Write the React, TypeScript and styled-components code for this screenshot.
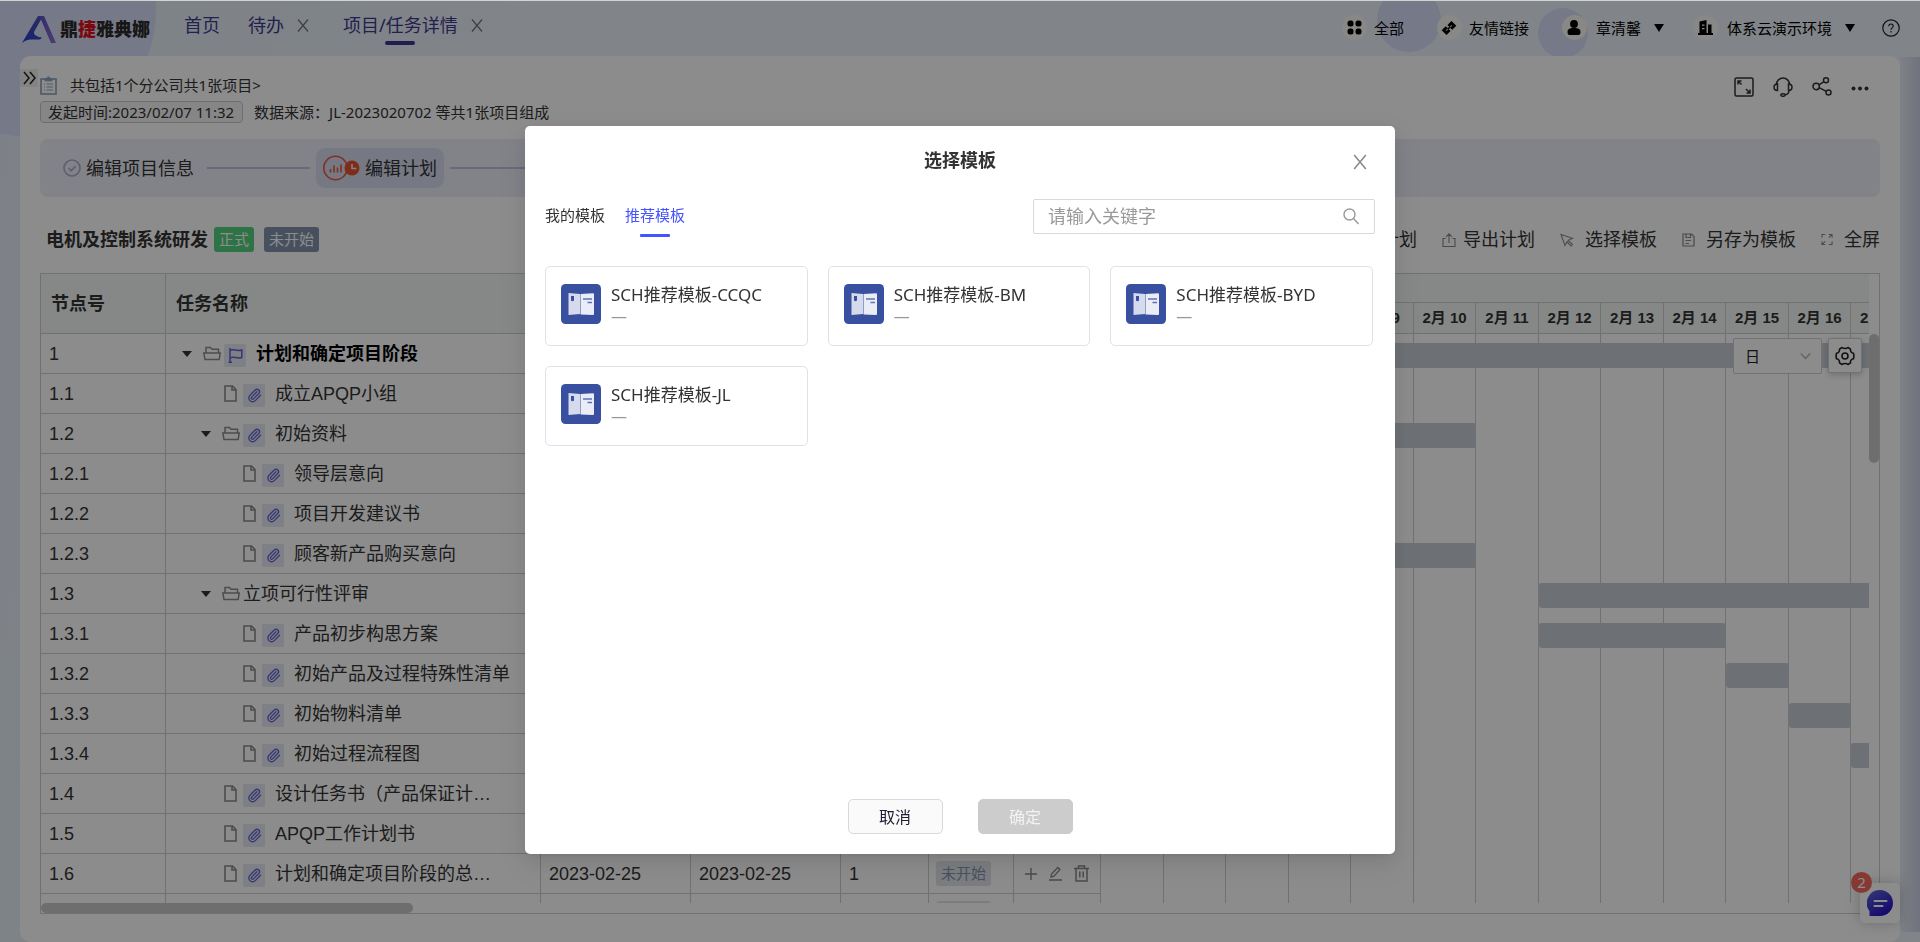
import React from "react";
import styled, { createGlobalStyle, css } from "styled-components";

const UI_FONT = `"Noto Sans", "Noto Sans CJK SC", sans-serif`;
const GRID_FONT = `"Liberation Sans", "Noto Sans CJK SC", sans-serif`;

const Global = createGlobalStyle`
  *, *::before, *::after { box-sizing: border-box; }
  body { margin: 0; background: #ecf3f9; font-family: ${UI_FONT}; font-size: 15px; line-height: 22px; color: #333; overflow: hidden; }
  button, input, select { font: inherit; color: inherit; margin: 0; padding: 0; }
  button { border: 0; background: none; cursor: pointer; }
  a { color: inherit; text-decoration: none; }
  svg { display: block; flex: none; }
`;

/* ---------- shell ---------- */

const Shell = styled.div`
  position: relative;
  height: 100vh;
  display: flex;
  flex-direction: column;
  border-top: 1px solid #cdd6d3;
  background: linear-gradient(100deg, #e4ecf6 0%, #ecf3f9 30%, #ecf3f9 100%);
  overflow: hidden;
`;

const Bubble = styled.span<{ $size: number; $top: number; $left?: number; $right?: number }>`
  position: absolute;
  width: ${(p) => p.$size}px;
  height: ${(p) => p.$size}px;
  top: ${(p) => p.$top}px;
  ${(p) => (p.$left !== undefined ? `left: ${p.$left}px;` : `right: ${p.$right}px;`)}
  border-radius: 50%;
  background: #d7dcf7;
`;

const EdgeShade = styled.span`
  position: absolute;
  top: 56px;
  right: 0;
  bottom: 10px;
  width: 20px;
  background: linear-gradient(90deg, rgba(205, 208, 228, 0.2), #cdd0e4);
`;

const TopBar = styled.header`
  position: relative;
  display: flex;
  justify-content: space-between;
  height: 55px;
  padding: 0 20px 0 22px;
`;

const Brand = styled.a`
  display: flex;
  align-items: center;
  gap: 4px;
  width: 162px;
  height: 56px;
  color: #2b2b2b;
  font-size: 18px;
  font-weight: 900;
  em { font-style: normal; color: #e0101c; }
`;

const NavSide = styled.div`
  display: flex;
  align-items: flex-start;
`;

const NavTab = styled.a<{ $active?: boolean }>`
  position: relative;
  height: 48px;
  padding-top: 12px;
  font-size: 18px;
  line-height: 24px;
  color: #40398f;
  ${(p) =>
    p.$active &&
    css`
      &::after {
        content: "";
        position: absolute;
        left: 50%;
        margin-left: -15px;
        top: 40px;
        width: 30px;
        height: 4px;
        border-radius: 2px;
        background: #3c3590;
      }
    `}
`;

const TabClose = styled.button<{ $gap: number }>`
  display: flex;
  align-items: center;
  height: 49px;
  margin-left: 13px;
  margin-right: ${(p) => p.$gap}px;
  color: #777;
`;

const NavSpacer = styled.span`
  width: 28px;
`;

const AccountSide = styled.div`
  display: flex;
  align-items: center;
  height: 53px;
  color: #000;
`;

const AccountItem = styled.button<{ $gap: number }>`
  display: flex;
  align-items: center;
  color: #000;
  margin-right: ${(p) => p.$gap}px;
`;

const Disc = styled.span<{ $gap: number }>`
  display: flex;
  align-items: center;
  justify-content: center;
  width: 25px;
  height: 25px;
  margin-right: ${(p) => p.$gap}px;
  border-radius: 50%;
  background: #f8f7f4;
`;

const Caret = styled.span`
  margin-left: 13px;
  border: 5px solid transparent;
  border-top: 8px solid #000;
  border-bottom: 0;
`;

/* ---------- page card ---------- */

const PageCard = styled.main`
  position: relative;
  flex: 1;
  min-height: 0;
  display: flex;
  flex-direction: column;
  margin: 0 20px;
  padding: 15px 20px 28px;
  border-radius: 11px;
  background: #fff;
`;

const Expander = styled.button`
  position: absolute;
  left: 0;
  top: 13px;
  width: 18px;
  height: 18px;
  display: flex;
  align-items: center;
  justify-content: center;
  background: #efefef;
  color: #222;
`;

const InfoHead = styled.section`
  display: flex;
  justify-content: space-between;
  height: 68px;
`;

const SourceLine = styled.div`
  display: flex;
  align-items: center;
  gap: 13px;
  height: 28px;
  margin-bottom: 2px;
`;

const MetaLine = styled.div`
  display: flex;
  align-items: center;
  gap: 11px;
  height: 22px;
`;

const TimeTag = styled.span`
  height: 22px;
  padding: 0 8px 0 7px;
  border: 1px solid #c8c8c8;
  border-radius: 4px;
  background: #f5f5f5;
  line-height: 20px;
`;

const HeadTools = styled.div`
  display: flex;
  align-items: center;
  gap: 19px;
  height: 31px;
  padding-right: 11px;
`;

const IconButton = styled.button`
  display: flex;
  align-items: center;
  justify-content: center;
  color: inherit;
`;

const Steps = styled.nav`
  display: flex;
  align-items: center;
  gap: 6px;
  height: 58px;
  padding: 0 16px;
  border-radius: 8px;
  background: #eceef7;
`;

const Step = styled.a<{ $active?: boolean }>`
  display: flex;
  align-items: center;
  gap: 5px;
  height: 40px;
  padding: 0 7px 1px;
  border-radius: 9px;
  font-size: 18px;
  background: ${(p) => (p.$active ? "#d7daf1" : "transparent")};
`;

const StepLine = styled.span`
  width: 103px;
  height: 2px;
  background: #c1c0e0;
`;

const PlanBar = styled.section`
  display: flex;
  align-items: center;
  justify-content: space-between;
  height: 76px;
  padding-top: 12px;
  padding-left: 6px;
`;

const PlanTitle = styled.h1`
  display: flex;
  align-items: center;
  gap: 6px;
  margin: 0;
  padding-bottom: 3px;
  font-size: 18px;
  line-height: 25px;
  font-weight: 700;
`;

const BadgeRow = styled.span`
  display: flex;
  gap: 10px;
`;

const Badge = styled.span<{ $tone: "green" | "slate" | "soft" }>`
  display: inline-block;
  height: 25px;
  padding: 0 5px;
  border-radius: 3px;
  font-size: 15px;
  line-height: 25px;
  font-weight: 400;
  ${(p) =>
    ({
      green: "background: #54d17e; color: #fff;",
      slate: "background: #8292ab; color: #fff;",
      soft: "background: #e1e4eb; color: #8294b2;",
    })[p.$tone]}
`;

const PlanTools = styled.div`
  display: flex;
  align-items: center;
  gap: 25px;
  padding-bottom: 3px;
`;

const PlanTool = styled.button<{ $gap: number }>`
  display: flex;
  align-items: center;
  gap: ${(p) => p.$gap}px;
  font-size: 18px;
  line-height: 25px;
  svg { color: #888; }
`;

/* ---------- plan panel ---------- */

const Panel = styled.section`
  position: relative;
  flex: 1;
  min-height: 0;
  display: grid;
  grid-template-columns: minmax(0, 1fr) 10px;
  grid-template-rows: minmax(0, 1fr) 10px;
  border: 1px solid #cecece;
  font-family: ${GRID_FONT};
`;

const PanelBody = styled.div`
  display: flex;
  overflow: hidden;
`;

const TaskTable = styled.table`
  flex: none;
  width: 1060px;
  table-layout: fixed;
  border-collapse: separate;
  border-spacing: 0;
  font-size: 18px;
  th, td {
    height: 40px;
    padding: 0 8px;
    border-right: 1px solid #cecece;
    border-bottom: 1px solid #cecece;
    text-align: left;
    white-space: nowrap;
    line-height: 24px;
    overflow: hidden;
  }
  th {
    height: 60px;
    padding: 0 10px;
    background: #f3f8f5;
    font-weight: 700;
  }
`;

const NameCell = styled.div<{ $level: number; $strong?: boolean }>`
  display: flex;
  align-items: center;
  padding-left: ${(p) => p.$level * 19 - 11}px;
  ${(p) => p.$strong && "font-weight: 700; color: #000;"}
`;

const Toggle = styled.span<{ $open?: boolean }>`
  width: 21px;
  &::before {
    content: "";
    display: ${(p) => (p.$open ? "block" : "none")};
    width: 0;
    border: 5px solid transparent;
    border-top: 6px solid #333;
    border-bottom: 0;
  }
`;

const KindSlot = styled.span<{ $leaf?: boolean }>`
  width: 21px;
  padding-left: ${(p) => (p.$leaf ? 2 : 0)}px;
  color: #8c8c8c;
`;

const MarkBox = styled.span`
  display: flex;
  align-items: center;
  justify-content: center;
  width: 22px;
  height: 23px;
  margin: 4px 10px 0 0;
  border-radius: 2px;
  background: #e7e8f5;
  color: #6065d0;
`;

const RowActions = styled.div`
  display: flex;
  align-items: center;
  justify-content: space-between;
  padding: 0 3px;
  color: #888;
`;

const Gantt = styled.div`
  flex: 1;
  min-width: 0;
  overflow: hidden;
`;

const MonthStrip = styled.div`
  height: 29px;
  border-bottom: 1px solid #cecece;
  background: #f3f8f5;
`;

const DayStrip = styled.div`
  display: flex;
  height: 31px;
  border-bottom: 1px solid #cecece;
  background: #f3f8f5;
`;

const Day = styled.span`
  flex: none;
  width: 63px;
  border-right: 1px solid #cecece;
  text-align: center;
  font-size: 15px;
  line-height: 29px;
  font-weight: 700;
  white-space: nowrap;
  &:nth-child(even) { width: 62px; }
`;

const Chart = styled.div`
  position: relative;
  height: 600px;
  display: flex;
`;

const DayColumn = styled.span`
  flex: none;
  width: 63px;
  border-right: 1px solid #cecece;
  &:nth-child(even) { width: 62px; }
`;

const Bar = styled.span`
  position: absolute;
  height: 25px;
  border-radius: 3px;
  background: #c7cdd4;
`;

const VTrack = styled.div`
  padding-top: 60px;
`;

const VThumb = styled.div`
  height: 129px;
  border-radius: 5px;
  background: #c8c8c8;
`;

const HThumb = styled.div`
  width: 372px;
  height: 10px;
  border-radius: 5px;
  background: #c8c8c8;
`;

const ScaleTools = styled.div`
  position: absolute;
  top: 64px;
  right: 17px;
  display: flex;
  gap: 6px;
`;

const ScaleLabel = styled.label`
  position: relative;
  display: block;
  color: #b0b0b0;
  svg { position: absolute; right: 11px; top: 13px; }
`;

const ScaleSelect = styled.select`
  appearance: none;
  display: block;
  width: 89px;
  height: 36px;
  padding: 0 11px;
  border: 1px solid #d0d0d0;
  border-radius: 2px;
  background: #fff;
  color: #222;
  font-family: ${UI_FONT};
  font-size: 15px;
`;

const GearButton = styled.button`
  display: flex;
  align-items: center;
  justify-content: center;
  width: 34px;
  height: 35px;
  border: 1px solid #d0d0d0;
  border-radius: 2px;
  background: #fff;
  color: #222;
  box-shadow: 0 2px 6px rgba(0, 0, 0, 0.2);
`;

/* ---------- chat ---------- */

const Chat = styled.button`
  position: absolute;
  right: 20px;
  bottom: 19px;
  display: flex;
  align-items: center;
  justify-content: center;
  width: 40px;
  height: 40px;
  border-radius: 5px;
  background: #fff;
  box-shadow: 0 0 14px rgba(0, 0, 0, 0.22);
`;

const ChatCount = styled.span`
  position: absolute;
  left: -9px;
  top: -11px;
  width: 21px;
  height: 21px;
  border-radius: 50%;
  background: #f4685c;
  color: #fff;
  line-height: 21px;
`;

/* ---------- dialog ---------- */

const Mask = styled.div`
  position: fixed;
  inset: 1px 0 0;
  display: flex;
  justify-content: center;
  align-items: flex-start;
  padding-top: 125px;
  background: rgba(0, 0, 0, 0.45);
`;

const Dialog = styled.section`
  position: relative;
  width: 870px;
  height: 728px;
  display: flex;
  flex-direction: column;
  padding: 0 20px 20px;
  border-radius: 5px;
  background: #fff;
  box-shadow: 0 3px 7px -4px rgba(0, 0, 0, 0.12), 0 7px 18px rgba(0, 0, 0, 0.08),
    0 10px 31px 9px rgba(0, 0, 0, 0.05);
`;

const DialogTitle = styled.h2`
  margin: 0 0 5px;
  font-size: 18px;
  line-height: 68px;
  font-weight: 700;
  text-align: center;
`;

const DialogClose = styled.button`
  position: absolute;
  top: 26px;
  right: 26px;
  padding: 2px;
  color: #888;
`;

const FilterRow = styled.div`
  display: flex;
  align-items: center;
  justify-content: space-between;
`;

const Tabs = styled.div`
  display: flex;
  gap: 20px;
`;

const Tab = styled.button<{ $active?: boolean }>`
  position: relative;
  padding-bottom: 2px;
  line-height: 33px;
  color: ${(p) => (p.$active ? "#4454ff" : "#333")};
  ${(p) =>
    p.$active &&
    css`
      &::after {
        content: "";
        position: absolute;
        left: 15px;
        right: 15px;
        bottom: -3px;
        height: 3px;
        border-radius: 1px;
        background: #4454ff;
      }
    `}
`;

const SearchBox = styled.label`
  display: flex;
  align-items: center;
  width: 342px;
  height: 35px;
  padding: 0 15px 0 14px;
  border: 1px solid #d9d9d9;
  border-radius: 2px;
  color: #999;
  input {
    flex: 1;
    min-width: 0;
    padding-bottom: 2px;
    border: 0;
    outline: 0;
    background: none;
    font-size: 18px;
    line-height: 24px;
  }
  input::placeholder { color: #999; opacity: 1; }
`;

const TemplateGrid = styled.div`
  flex: 1;
  display: grid;
  grid-template-columns: repeat(3, 1fr);
  grid-auto-rows: 80px;
  gap: 20px;
  margin: 32px 2px 0 0;
`;

const TemplateCard = styled.button`
  display: flex;
  align-items: flex-start;
  gap: 10px;
  padding: 17px 15px;
  border: 1px solid #dce3eb;
  border-radius: 5px;
  text-align: left;
`;

const TemplateText = styled.span`
  display: grid;
  font-size: 17px;
  line-height: 22px;
  small { font-size: 16px; line-height: 20px; color: #999; }
`;

const DialogFooter = styled.footer`
  display: flex;
  justify-content: center;
  gap: 35px;
`;

const FooterButton = styled.button<{ $disabled?: boolean }>`
  width: 95px;
  height: 35px;
  border: 1px solid ${(p) => (p.$disabled ? "#ccc" : "#d9d9d9")};
  border-radius: 5px;
  background: ${(p) => (p.$disabled ? "#ccc" : "#fafafa")};
  color: ${(p) => (p.$disabled ? "#f2f2f2" : "#1d1c33")};
  font-size: 16px;
`;

/* ---------- drawings ---------- */

const Cross = ({ w = 12, h = 13 }: { w?: number; h?: number }) => (
  <svg width={w} height={h} viewBox="0 0 12 13" fill="none" stroke="currentColor" strokeWidth="1.3">
    <path d="M1 .5 11 12.5M11 .5 1 12.5" />
  </svg>
);

const Logo = () => (
  <svg width="34" height="27" viewBox="0 0 34 27">
    <defs>
      <linearGradient id="lg1" x1="0" y1="1" x2="1" y2="0">
        <stop offset="0" stopColor="#1d3fd0" />
        <stop offset="1" stopColor="#5a4fae" />
      </linearGradient>
      <linearGradient id="lg2" x1="0" y1="0" x2="1" y2="1">
        <stop offset="0" stopColor="#5a4fc8" />
        <stop offset="1" stopColor="#8a6fc8" />
      </linearGradient>
    </defs>
    <path d="M16 0h5L12.500 15c-1.500 2.500 0 4.500 4.500 6l3 .5-2 2H7.500Q3 24 0 27Z" fill="url(#lg1)" />
    <path d="M16 0h6l12 27h-5L18.500 2.500Z" fill="url(#lg2)" />
  </svg>
);

const GridGlyph = () => (
  <svg width="15" height="15" viewBox="0 0 15 15" fill="#000">
    <rect x="0.500" y="0.500" width="6" height="6" rx="2.500" />
    <rect x="8.500" y="0.500" width="6" height="6" rx="2.500" />
    <rect x="0.500" y="8.500" width="6" height="6" rx="2.500" />
    <rect x="8.500" y="8.500" width="6" height="6" rx="2.500" />
  </svg>
);

const LinkGlyph = () => (
  <svg width="16" height="16" viewBox="0 0 16 16" fill="none" stroke="#000" strokeWidth="3">
    <path d="M7.500 6 10.500 3l2.700 2.700-3 3M8.500 10l-3 3-2.700-2.700 3-3" />
    <path d="m6.800 9.200 2.400-2.400" strokeWidth="1.600" />
  </svg>
);

const UserGlyph = () => (
  <svg width="14" height="15" viewBox="0 0 14 15" fill="#000">
    <circle cx="7" cy="4" r="3.900" />
    <path d="M.5 12c0-3 2-4 6.500-4s6.500 1 6.500 4c0 2-.7 3-2 3h-9c-1.300 0-2-1-2-3Z" />
  </svg>
);

const TowerGlyph = () => (
  <svg width="15" height="15" viewBox="0 0 15 15" fill="#000">
    <path fillRule="evenodd" d="M1.500 1.500 8.500 0v13H10V4.500h3.500V13H15v2H0v-2h1.500ZM4 4.500v1.200h2.500V4.500ZM4 8v1.200h2.500V8Z" />
  </svg>
);

const HelpGlyph = () => (
  <svg width="18" height="18" viewBox="0 0 18 18" fill="none" stroke="#222" strokeWidth="1.200">
    <circle cx="9" cy="9" r="8.200" />
    <path d="M6.800 7.300c0-3 4.400-3 4.400-.2 0 1.800-2.200 1.800-2.200 3.600M9 12v1.500" />
  </svg>
);

const ClipboardGlyph = () => (
  <svg width="17" height="19" viewBox="0 0 17 19" fill="none" stroke="#8ca3ba">
    <rect x="1" y="3" width="15" height="15" strokeWidth="1.600" />
    <path d="M5 4.800V2.500h2a1.500 1.500 0 0 1 3 0h2v2.300Z" fill="#8ca3ba" />
    <path d="M4 8h1m1.500 0H13M4 11h1m1.500 0H13M4 14h1m1.500 0H13" strokeWidth="1.200" />
  </svg>
);

const ResizeGlyph = () => (
  <svg width="20" height="20" viewBox="0 0 20 20" fill="none" stroke="currentColor" strokeWidth="1.500">
    <rect x="1" y="1" width="18" height="18" rx="1.500" />
    <path d="M4 7.500V4h3.500M4 4l3.500 3.500M16 12.500V16h-3.500M16 16l-4-4" />
  </svg>
);

const HeadsetGlyph = () => (
  <svg width="20" height="20" viewBox="0 0 20 20" fill="none" stroke="currentColor" strokeWidth="1.500">
    <path d="M3.500 7.500a6.500 6.500 0 0 1 13 0M4.500 7C2 7 1 8.500 1 10.300s1 3.200 3.500 3.200ZM15.500 7c2.500 0 3.500 1.500 3.500 3.300s-1 3.200-3.500 3.200ZM16 13.500c0 2.500-1.500 4-4 4.300" />
    <ellipse cx="10" cy="18" rx="2.200" ry="1.300" />
  </svg>
);

const ShareGlyph = () => (
  <svg width="20" height="20" viewBox="0 0 20 20" fill="none" stroke="currentColor" strokeWidth="1.500">
    <circle cx="4.200" cy="9.500" r="3.200" />
    <circle cx="14" cy="3.300" r="2.500" />
    <circle cx="16.500" cy="15.500" r="2.500" />
    <path d="m7 7.800 4.900-3.100M7.200 10.700l7 3.600" />
  </svg>
);

const DotsGlyph = () => (
  <svg width="18" height="20" viewBox="0 0 18 20" fill="currentColor">
    <circle cx="2.500" cy="11.500" r="2" />
    <circle cx="9" cy="11.500" r="2" />
    <circle cx="15.500" cy="11.500" r="2" />
  </svg>
);

const CheckGlyph = () => (
  <svg width="18" height="18" viewBox="0 0 18 18" fill="none" stroke="#adabd2" strokeWidth="1.700">
    <circle cx="9" cy="9" r="8" />
    <path d="m5.500 9 2.700 2.700 4.500-4.500" />
  </svg>
);

const StageGlyph = () => (
  <svg width="37" height="26" viewBox="0 0 37 26" fill="none" stroke="#e8583a">
    <circle cx="12.500" cy="13" r="11.700" strokeWidth="1.600" />
    <path d="M7.500 17.500V14m3.500 3.500V10.500m3.500 7v-5m3.500 5V9.500" strokeWidth="1.600" />
    <circle cx="29" cy="13" r="7.500" fill="#e8502f" stroke="none" />
    <path d="M29 9v4.500h4.500" stroke="#edeff9" strokeWidth="1.500" />
  </svg>
);

const ExportGlyph = () => (
  <svg width="14" height="14" viewBox="0 0 14 14" fill="none" stroke="currentColor" strokeWidth="1.100">
    <path d="M3.500 5.500H1v8h12v-8h-2.500M7 10V1M4 3.800l3-3 3 3" />
  </svg>
);

const CursorGlyph = () => (
  <svg width="14" height="14" viewBox="0 0 14 14" fill="none" stroke="currentColor" strokeWidth="1.100">
    <path d="m1 1.500 11.500 3.800-4.300 2 4.300 4.200-1.500 1.500L7 8.800 5 12.500Z" />
  </svg>
);

const SaveGlyph = () => (
  <svg width="13" height="14" viewBox="0 0 13 14" fill="none" stroke="currentColor" strokeWidth="1.200">
    <path d="M1 1h8.500L12 3.500V13H1ZM4 1v3.500h4.500V1M3.500 7.500H9M3.500 10.500H7" />
  </svg>
);

const FullGlyph = () => (
  <svg width="12" height="13" viewBox="0 0 13 13" fill="none" stroke="currentColor" strokeWidth="1.100">
    <path d="M1 4.500V1h3.500M8.500 1H12v3.500M12 8.500V12H8.500M4.500 12H1V8.500M12 1 8.500 4.500M1 12l3.500-3.500" />
  </svg>
);

const FolderGlyph = () => (
  <svg width="18" height="15" viewBox="0 0 18 15" fill="none" stroke="currentColor" strokeWidth="1.500">
    <path d="M3 7V1.500h4.500L9 3.200h6.500V7M.8 7h16.400l-1 6.500H2Z" />
  </svg>
);

const FileGlyph = () => (
  <svg width="13" height="17" viewBox="0 0 13 17" fill="none" stroke="currentColor" strokeWidth="1.600">
    <path d="M1 1h7.500L12 4.500V16H1ZM8 1v4h4" />
  </svg>
);

const FlagGlyph = () => (
  <svg width="15" height="15" viewBox="0 0 15 15" fill="none" stroke="currentColor" strokeWidth="1.500">
    <path d="M2 0v14.300M.5 14.300h3.500M2 2.500c4-2.500 6 1.500 11.800-.5v7.500C9 11.500 6 7.500 2 10" />
  </svg>
);

const ClipGlyph = () => (
  <svg width="15" height="15" viewBox="0 0 24 24" fill="none" stroke="currentColor" strokeWidth="2.100" strokeLinecap="round">
    <path d="m16 6-8.414 8.586a2 2 0 0 0 2.829 2.829l8.414-8.586a4 4 0 1 0-5.657-5.657l-8.379 8.551a6 6 0 1 0 8.485 8.485l8.379-8.551" />
  </svg>
);

const PlusGlyph = () => (
  <svg width="12" height="14" viewBox="0 0 12 14" fill="none" stroke="currentColor" strokeWidth="1.400">
    <path d="M6 1v12M0 7h12" />
  </svg>
);

const PenGlyph = () => (
  <svg width="13" height="15" viewBox="0 0 13 15" fill="none" stroke="currentColor" strokeWidth="1.300">
    <path d="m2 11 .5-3L8.800 1.500 11 3.500 5 10.200ZM0 14h13" />
  </svg>
);

const BinGlyph = () => (
  <svg width="15" height="17" viewBox="0 0 15 17" fill="none" stroke="currentColor" strokeWidth="1.500">
    <path d="M0 3.500h15M4.500 3V1h6v2M2 3.500V16h11V3.500M5.800 6.500v6M9.200 6.500v6" />
  </svg>
);

const GearGlyph = () => (
  <svg width="20" height="20" viewBox="0 0 20 20" fill="none" stroke="currentColor" strokeWidth="1.600" strokeLinejoin="round">
    <path d="M7 1.500c1.500 1.300 4.500 1.300 6 0l2.500 1.600c-.3 2 .9 3.900 3 4.200.5 1.800.5 3.600 0 5.400-2.100.3-3.300 2.200-3 4.200L13 18.500c-1.500-1.300-4.500-1.300-6 0l-2.500-1.600c.3-2-.9-3.900-3-4.200a9 9 0 0 1 0-5.400c2.100-.3 3.300-2.200 3-4.200Z" />
    <circle cx="10" cy="10" r="3" />
  </svg>
);

const SearchGlyph = () => (
  <svg width="16" height="17" viewBox="0 0 16 17" fill="none" stroke="currentColor" strokeWidth="1.400">
    <circle cx="6.500" cy="6.500" r="5.500" />
    <path d="m10.500 10.500 5 5.500" />
  </svg>
);

const BookGlyph = () => (
  <svg width="40" height="40" viewBox="0 0 40 40">
    <rect width="40" height="40" rx="4.500" fill="#394f9f" />
    <path d="M7.500 9 19 10v20L7.500 31Z" fill="#d5daec" />
    <path d="M19.500 10 32 9.300q1 0 1 1V30q0 1-1 1L19.500 30.500Z" fill="#eaedf6" />
    <path d="M10 12h3v4.500q-1.500 1.500-3 0Z" fill="#394f9f" />
    <path d="M22 15h9M26.500 18.500H31" stroke="#5f72b5" strokeWidth="1.600" />
  </svg>
);

const ChatGlyph = () => (
  <svg width="26" height="26" viewBox="0 0 26 26">
    <defs>
      <linearGradient id="cg" x1=".2" y1="0" x2=".8" y2="1">
        <stop offset="0" stopColor="#5a62d6" />
        <stop offset="1" stopColor="#2409c4" />
      </linearGradient>
    </defs>
    <path d="M13 0a13 13 0 1 1 0 26H2.500v-5A13 13 0 0 1 13 0Z" fill="url(#cg)" />
    <path d="M7.500 11h12M7.500 16h8" stroke="#fff" strokeWidth="2" strokeLinecap="round" />
  </svg>
);

/* ---------- data ---------- */

type Task = {
  no: string;
  name: string;
  level: number;
  open?: boolean;
  mark?: "flag" | "clip";
  start?: string;
  end?: string;
  days?: string;
};

const TASKS: Task[] = [
  { no: "1", name: "计划和确定项目阶段", level: 1, open: true, mark: "flag" },
  { no: "1.1", name: "成立APQP小组", level: 2, mark: "clip" },
  { no: "1.2", name: "初始资料", level: 2, open: true, mark: "clip" },
  { no: "1.2.1", name: "领导层意向", level: 3, mark: "clip" },
  { no: "1.2.2", name: "项目开发建议书", level: 3, mark: "clip" },
  { no: "1.2.3", name: "顾客新产品购买意向", level: 3, mark: "clip" },
  { no: "1.3", name: "立项可行性评审", level: 2, open: true },
  { no: "1.3.1", name: "产品初步构思方案", level: 3, mark: "clip" },
  { no: "1.3.2", name: "初始产品及过程特殊性清单", level: 3, mark: "clip" },
  { no: "1.3.3", name: "初始物料清单", level: 3, mark: "clip" },
  { no: "1.3.4", name: "初始过程流程图", level: 3, mark: "clip" },
  { no: "1.4", name: "设计任务书（产品保证计…", level: 2, mark: "clip" },
  { no: "1.5", name: "APQP工作计划书", level: 2, mark: "clip" },
  { no: "1.6", name: "计划和确定项目阶段的总…", level: 2, mark: "clip", start: "2023-02-25", end: "2023-02-25", days: "1" },
];

const DAYS = Array.from({ length: 13 }, (_, i) => i + 5);

/* Bars by row, from and to in days counted from the first visible day. */
const BARS = [
  { row: 0, from: 0, to: 13 },
  { row: 2, from: 1, to: 6 },
  { row: 5, from: 3, to: 6 },
  { row: 6, from: 7, to: 13 },
  { row: 7, from: 7, to: 10 },
  { row: 8, from: 10, to: 11 },
  { row: 9, from: 11, to: 12 },
  { row: 10, from: 12, to: 13 },
];

const dayX = (day: number) => Math.ceil(day * 62.5);

const TEMPLATES = ["SCH推荐模板-CCQC", "SCH推荐模板-BM", "SCH推荐模板-BYD", "SCH推荐模板-JL"];

/* ---------- sections ---------- */

const Header = () => (
  <TopBar>
    <NavSide>
      <Brand href="#" aria-label="鼎捷雅典娜">
        <Logo />
        <span>鼎<em>捷</em>雅典娜</span>
      </Brand>
      <NavTab href="#">首页</NavTab>
      <NavSpacer />
      <NavTab href="#">待办</NavTab>
      <TabClose $gap={34} aria-label="关闭待办"><Cross /></TabClose>
      <NavTab href="#" $active>项目/任务详情</NavTab>
      <TabClose $gap={0} aria-label="关闭项目"><Cross /></TabClose>
    </NavSide>
    <AccountSide>
      <AccountItem $gap={33}><Disc $gap={7}><GridGlyph /></Disc>全部</AccountItem>
      <AccountItem $gap={33}><Disc $gap={7}><LinkGlyph /></Disc>友情链接</AccountItem>
      <AccountItem $gap={29}><Disc $gap={9}><UserGlyph /></Disc>章清馨<Caret /></AccountItem>
      <AccountItem $gap={27}><Disc $gap={9}><TowerGlyph /></Disc>体系云演示环境<Caret /></AccountItem>
      <IconButton aria-label="帮助"><HelpGlyph /></IconButton>
    </AccountSide>
  </TopBar>
);

const StatusCell = styled.td`
  && { padding: 0 7px; }
  ${Badge} { display: block; width: 55px; }
`;

const TaskRow = ({ task }: { task: Task }) => (
  <tr>
    <td>{task.no}</td>
    <td>
      <NameCell $level={task.level} $strong={task.level === 1}>
        <Toggle $open={task.open} />
        <KindSlot $leaf={!task.open}>{task.open ? <FolderGlyph /> : <FileGlyph />}</KindSlot>
        {task.mark && <MarkBox>{task.mark === "flag" ? <FlagGlyph /> : <ClipGlyph />}</MarkBox>}
        {task.name}
      </NameCell>
    </td>
    <td>{task.start}</td>
    <td>{task.end}</td>
    <td>{task.days}</td>
    <StatusCell><Badge $tone="soft">未开始</Badge></StatusCell>
    <td>
      <RowActions>
        <IconButton aria-label="新增"><PlusGlyph /></IconButton>
        <IconButton aria-label="编辑"><PenGlyph /></IconButton>
        <IconButton aria-label="删除"><BinGlyph /></IconButton>
      </RowActions>
    </td>
  </tr>
);

const PlanPanel = () => (
  <Panel>
    <PanelBody>
      <TaskTable>
        <colgroup>
          <col style={{ width: 125 }} />
          <col style={{ width: 375 }} />
          <col style={{ width: 150 }} />
          <col style={{ width: 150 }} />
          <col style={{ width: 88 }} />
          <col style={{ width: 85 }} />
          <col style={{ width: 87 }} />
        </colgroup>
        <thead>
          <tr>
            <th>节点号</th>
            <th>任务名称</th>
            <th /><th /><th /><th /><th />
          </tr>
        </thead>
        <tbody>
          {TASKS.map((t) => <TaskRow key={t.no} task={t} />)}
          <TaskRow task={{ no: "", name: "", level: 2 }} />
        </tbody>
      </TaskTable>
      <Gantt>
        <MonthStrip />
        <DayStrip>{DAYS.map((d) => <Day key={d}>2月 {d}</Day>)}</DayStrip>
        <Chart>
          {DAYS.map((d) => <DayColumn key={d} />)}
          {BARS.map((b) => (
            <Bar
              key={b.row}
              style={{ top: b.row * 40 + 9, left: dayX(b.from), width: dayX(b.to) - dayX(b.from) }}
            />
          ))}
        </Chart>
      </Gantt>
    </PanelBody>
    <VTrack><VThumb /></VTrack>
    <HThumb />
    <ScaleTools>
      <ScaleLabel>
        <ScaleSelect aria-label="时间刻度" defaultValue="day">
          <option value="day">日</option>
        </ScaleSelect>
        <svg width="11" height="10" viewBox="0 0 11 10" fill="none" stroke="currentColor" strokeWidth="1.200">
          <path d="m.8 2.500 4.700 5 4.700-5" />
        </svg>
      </ScaleLabel>
      <GearButton aria-label="设置"><GearGlyph /></GearButton>
    </ScaleTools>
  </Panel>
);

const TemplateDialog = () => (
  <Mask>
    <Dialog role="dialog" aria-modal="true" aria-labelledby="dlg-title">
      <DialogTitle id="dlg-title">选择模板</DialogTitle>
      <DialogClose aria-label="关闭"><Cross w={14} h={16} /></DialogClose>
      <FilterRow>
        <Tabs role="tablist">
          <Tab role="tab" aria-selected={false}>我的模板</Tab>
          <Tab role="tab" aria-selected $active>推荐模板</Tab>
        </Tabs>
        <SearchBox>
          <input type="text" placeholder="请输入关键字" aria-label="请输入关键字" />
          <SearchGlyph />
        </SearchBox>
      </FilterRow>
      <TemplateGrid>
        {TEMPLATES.map((name) => (
          <TemplateCard key={name}>
            <BookGlyph />
            <TemplateText>
              {name}
              <small>—</small>
            </TemplateText>
          </TemplateCard>
        ))}
      </TemplateGrid>
      <DialogFooter>
        <FooterButton>取消</FooterButton>
        <FooterButton $disabled disabled>确定</FooterButton>
      </DialogFooter>
    </Dialog>
  </Mask>
);

export default function App() {
  return (
    <>
      <Global />
      <Shell>
        <Bubble $size={252} $top={-116} $left={-96} />
        <Bubble $size={64} $top={-13} $right={479} />
        <Bubble $size={50} $top={7} $right={332} />
        <EdgeShade />
        <Header />
        <PageCard>
          <Expander aria-label="展开">
            <svg width="13" height="14" viewBox="0 0 13 14" fill="none" stroke="currentColor" strokeWidth="1.500">
              <path d="m1 1 5 6-5 6M7 1l5 6-5 6" />
            </svg>
          </Expander>
          <InfoHead>
            <div>
              <SourceLine><ClipboardGlyph /><span>共包括1个分公司共1张项目&gt;</span></SourceLine>
              <MetaLine>
                <TimeTag>发起时间:2023/02/07 11:32</TimeTag>
                <span>数据来源：JL-2023020702 等共1张项目组成</span>
              </MetaLine>
            </div>
            <HeadTools>
              <IconButton aria-label="放大"><ResizeGlyph /></IconButton>
              <IconButton aria-label="客服"><HeadsetGlyph /></IconButton>
              <IconButton aria-label="分享"><ShareGlyph /></IconButton>
              <IconButton aria-label="更多"><DotsGlyph /></IconButton>
            </HeadTools>
          </InfoHead>
          <Steps>
            <Step href="#"><CheckGlyph />编辑项目信息</Step>
            <StepLine />
            <Step href="#" $active><StageGlyph />编辑计划</Step>
            <StepLine />
          </Steps>
          <PlanBar>
            <PlanTitle>
              电机及控制系统研发
              <BadgeRow>
                <Badge $tone="green">正式</Badge>
                <Badge $tone="slate">未开始</Badge>
              </BadgeRow>
            </PlanTitle>
            <PlanTools>
              <PlanTool $gap={8}><ExportGlyph />导入计划</PlanTool>
              <PlanTool $gap={7}><ExportGlyph />导出计划</PlanTool>
              <PlanTool $gap={11}><CursorGlyph />选择模板</PlanTool>
              <PlanTool $gap={11}><SaveGlyph />另存为模板</PlanTool>
              <PlanTool $gap={11}><FullGlyph />全屏</PlanTool>
            </PlanTools>
          </PlanBar>
          <PlanPanel />
        </PageCard>
        <Chat aria-label="消息">
          <ChatGlyph />
          <ChatCount>2</ChatCount>
        </Chat>
      </Shell>
      <TemplateDialog />
    </>
  );
}
